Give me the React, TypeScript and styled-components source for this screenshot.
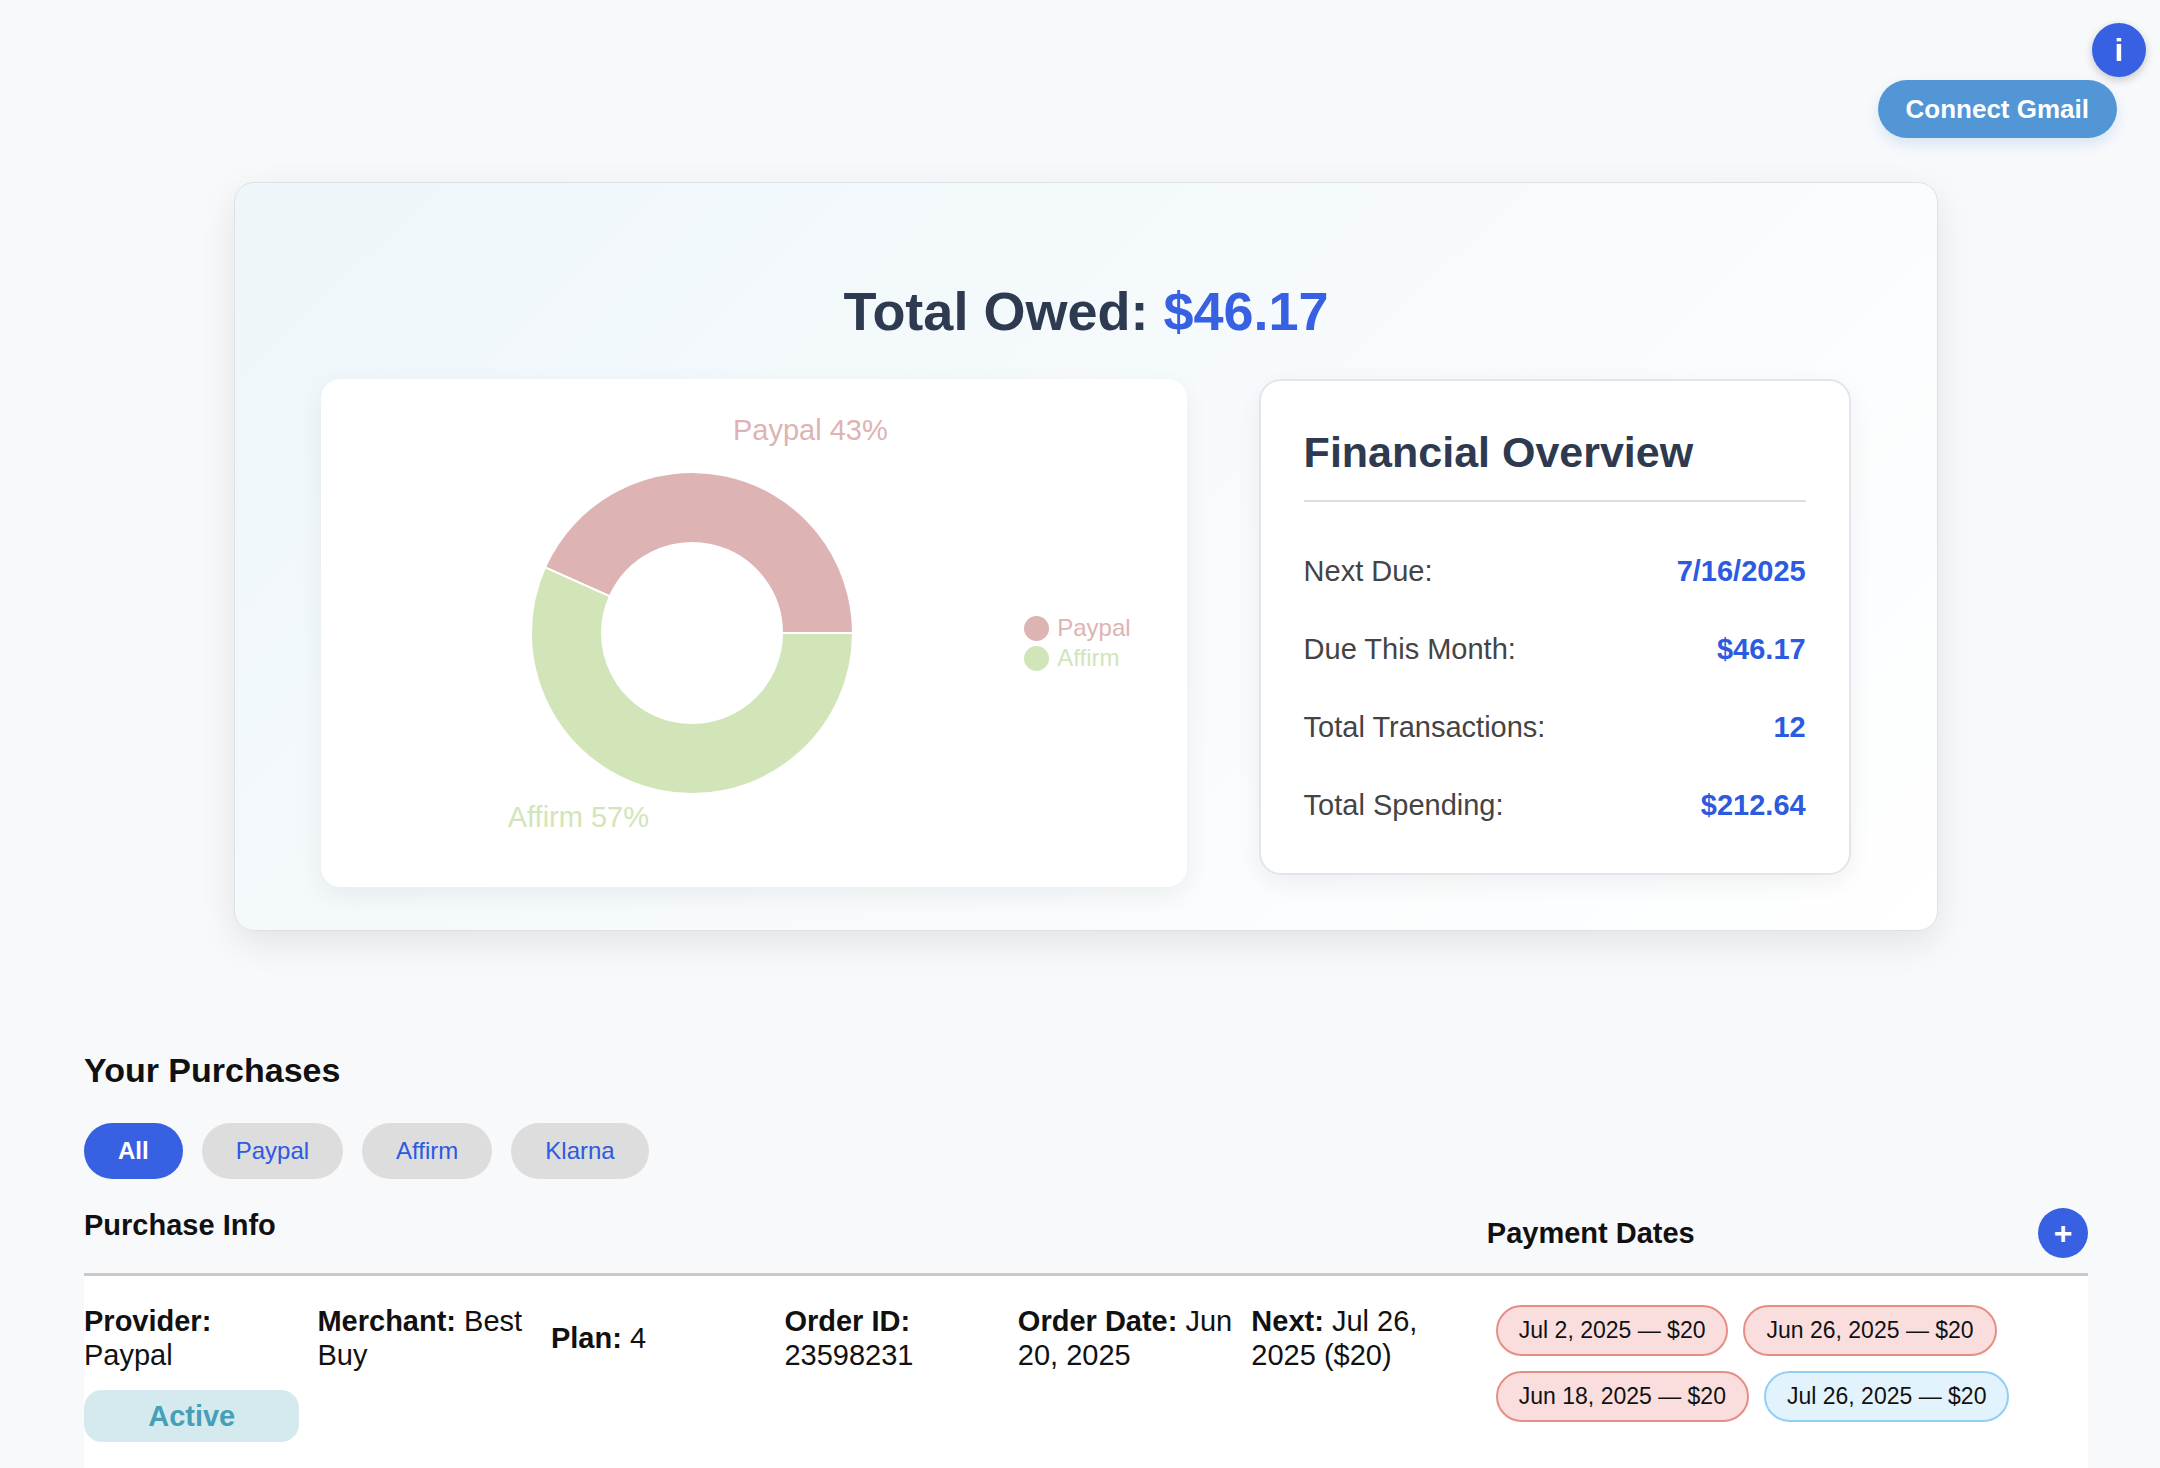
import React, { useState } from 'react';
import styled, { createGlobalStyle } from 'styled-components';

const blue = '#3760e2';
const ink = '#111111';
const slate = '#2d3a50';

const GlobalStyle = createGlobalStyle`
  *, *::before, *::after {
    box-sizing: border-box;
  }
  body {
    margin: 0;
    background: #f8f9fb;
    color: ${ink};
    font-family: "Liberation Sans", Arial, Helvetica, sans-serif;
    font-size: 29px;
    line-height: 34px;
  }
  button {
    font-family: inherit;
    border: 0;
    cursor: pointer;
  }
`;

const TopBar = styled.header`
  display: flex;
  justify-content: flex-end;
  padding: 80px 43px 0;
`;

const ConnectButton = styled.button`
  padding: 14px 28px;
  border-radius: 29px;
  background: #5296d6;
  color: #ffffff;
  font-size: 26px;
  font-weight: 700;
  line-height: 30px;
  box-shadow: 0 6px 14px rgba(82, 150, 214, 0.2);
`;

const RoundButton = styled.button<{ $size: number }>`
  display: flex;
  align-items: center;
  justify-content: center;
  width: ${(p) => p.$size}px;
  height: ${(p) => p.$size}px;
  padding: 0;
  border-radius: 50%;
  background: ${blue};
  color: #ffffff;
  font-size: 32px;
  font-weight: 700;
  line-height: 32px;
`;

const InfoButton = styled(RoundButton)`
  position: fixed;
  top: 23px;
  right: 14px;
  box-shadow: 0 3px 10px rgba(0, 0, 0, 0.2);
`;

const Page = styled.main`
  padding: 44px 72px 0 84px;
`;

const Summary = styled.section`
  width: 85%;
  margin: 0 auto 120px;
  padding: 96px 86px 43px;
  border: 1px solid #dde1e7;
  border-radius: 20px;
  background: linear-gradient(135deg, #eef6fa 0%, #ffffff 100%);
  box-shadow: 0 12px 36px rgba(0, 0, 0, 0.09);
`;

const TotalOwed = styled.h1`
  margin: 0 0 36px;
  color: ${slate};
  font-size: 54px;
  line-height: 64px;
  text-align: center;
`;

const Amount = styled.span`
  color: ${blue};
`;

const SummaryGrid = styled.div`
  display: grid;
  grid-template-columns: minmax(0, 19fr) minmax(0, 13fr);
  gap: 72px;
  align-items: start;
`;

const ChartCard = styled.figure`
  display: flex;
  align-items: center;
  gap: 18px;
  margin: 0;
  padding: 32px 56px;
  border-radius: 20px;
  background: #ffffff;
  box-shadow: 0 8px 26px rgba(0, 0, 0, 0.06);
`;

const ChartArea = styled.div`
  display: flex;
  flex: 1;
  justify-content: center;
`;

const Legend = styled.ul`
  margin: 0;
  padding: 20px 0 0;
  list-style: none;
`;

const LegendItem = styled.li<{ $color: string }>`
  display: flex;
  align-items: center;
  gap: 8px;
  color: ${(p) => p.$color};
  font-size: 24px;
  line-height: 30px;

  &::before {
    content: "";
    width: 25px;
    height: 25px;
    border-radius: 50%;
    background: ${(p) => p.$color};
  }
`;

const Overview = styled.section`
  padding: 45px 43px 29px;
  border: 2px solid #e2e6ec;
  border-radius: 22px;
  background: #ffffff;
  box-shadow: 0 8px 26px rgba(0, 0, 0, 0.06);
`;

const OverviewTitle = styled.h2`
  margin: 0 0 30px;
  padding-bottom: 22px;
  border-bottom: 2px solid #dddddd;
  color: ${slate};
  font-size: 43px;
  line-height: 52px;
`;

const Stats = styled.dl`
  margin: 0;
`;

const Stat = styled.div`
  display: flex;
  justify-content: space-between;
  padding: 22px 0;
`;

const StatLabel = styled.dt`
  color: #444444;
`;

const StatValue = styled.dd`
  margin: 0;
  color: #2c5ae0;
  font-weight: 700;
`;

const PurchasesTitle = styled.h2`
  margin: 0 0 34px;
  font-size: 34px;
  line-height: 38px;
`;

const Filters = styled.div`
  display: flex;
  gap: 19px;
  margin-bottom: 29px;
`;

const FilterButton = styled.button<{ $active: boolean }>`
  padding: 14px 34px;
  border-radius: 28px;
  background: ${(p) => (p.$active ? blue : '#dddddd')};
  color: ${(p) => (p.$active ? '#ffffff' : '#2c5ae0')};
  font-size: 24px;
  font-weight: ${(p) => (p.$active ? 700 : 400)};
  line-height: 28px;
`;

const Table = styled.table`
  width: 100%;
  border-collapse: separate;
  border-spacing: 0;
  table-layout: fixed;
`;

const HeadCell = styled.th<{ $width: string }>`
  width: ${(p) => p.$width};
  padding: 0 0 15px;
  border-bottom: 3px solid #c9c9c9;
  text-align: left;
  vertical-align: top;
`;

const HeadBar = styled.div`
  display: flex;
  align-items: center;
  justify-content: space-between;
`;

const InfoCell = styled.td`
  padding: 28px 20px 26px 0;
  background: #ffffff;
  vertical-align: top;
`;

const DatesCell = styled.td`
  padding: 29px 9px;
  background: #ffffff;
  vertical-align: top;
`;

const Fields = styled.div`
  display: grid;
  grid-template-columns: repeat(6, minmax(0, 1fr));
  gap: 18px;
  align-items: center;
`;

const Status = styled.span`
  padding: 9px 12px;
  border-radius: 18px;
  background: #d5eaef;
  color: #459fb6;
  font-weight: 700;
  text-align: center;
`;

const DateList = styled.ul`
  display: flex;
  flex-wrap: wrap;
  gap: 15px;
  margin: 0;
  padding: 0;
  list-style: none;
`;

const DatePill = styled.li<{ $past: boolean }>`
  padding: 10px 21px;
  border: 2px solid ${(p) => (p.$past ? '#e58e86' : '#92cff3')};
  border-radius: 26px;
  background: ${(p) => (p.$past ? '#fadede' : '#e3f3fd')};
  font-size: 23px;
  line-height: 27px;
`;

type Slice = { name: string; amount: number; color: string; labelX: number; labelY: number; anchor: 'start' | 'end' };

const slices: Slice[] = [
  { name: 'Paypal', amount: 20, color: '#deb3b3', labelX: 251, labelY: 29, anchor: 'start' },
  { name: 'Affirm', amount: 26.17, color: '#d1e5b8', labelX: 167, labelY: 416, anchor: 'end' },
];

const stats = [
  ['Next Due:', '7/16/2025'],
  ['Due This Month:', '$46.17'],
  ['Total Transactions:', '12'],
  ['Total Spending:', '$212.64'],
];

const providers = ['All', 'Paypal', 'Affirm', 'Klarna'];

const purchases = [
  {
    provider: 'Paypal',
    fields: [
      ['Provider:', 'Paypal'],
      ['Merchant:', 'Best Buy'],
      ['Plan:', '4'],
      ['Order ID:', '23598231'],
      ['Order Date:', 'Jun 20, 2025'],
      ['Next:', 'Jul 26, 2025 ($20)'],
    ],
    status: 'Active',
    dates: [
      { text: 'Jul 2, 2025 — $20', past: true },
      { text: 'Jun 26, 2025 — $20', past: true },
      { text: 'Jun 18, 2025 — $20', past: true },
      { text: 'Jul 26, 2025 — $20', past: false },
    ],
  },
];

const CENTER_X = 210;
const CENTER_Y = 222;
const OUTER = 161;
const INNER = 90;

function point(radius: number, angle: number) {
  return `${CENTER_X + radius * Math.cos(angle)} ${CENTER_Y - radius * Math.sin(angle)}`;
}

function ringPath(start: number, end: number) {
  const large = end - start > Math.PI ? 1 : 0;
  return [
    `M ${point(OUTER, start)}`,
    `A ${OUTER} ${OUTER} 0 ${large} 0 ${point(OUTER, end)}`,
    `L ${point(INNER, end)}`,
    `A ${INNER} ${INNER} 0 ${large} 1 ${point(INNER, start)}`,
    'Z',
  ].join(' ');
}

function Donut() {
  const total = slices.reduce((sum, s) => sum + s.amount, 0);
  let angle = 0;
  return (
    <svg width="420" height="444" viewBox="0 0 420 444" role="img" aria-label="Amount owed by provider">
      {slices.map((s) => {
        const start = angle;
        angle += (s.amount / total) * Math.PI * 2;
        return (
          <g key={s.name} fill={s.color}>
            <path d={ringPath(start, angle)} stroke="#ffffff" strokeWidth="2" />
            <text x={s.labelX} y={s.labelY} textAnchor={s.anchor} fontSize="29">
              {`${s.name} ${Math.round((s.amount / total) * 100)}%`}
            </text>
          </g>
        );
      })}
    </svg>
  );
}

export default function App() {
  const [filter, setFilter] = useState('All');
  const visible = purchases.filter((p) => filter === 'All' || p.provider === filter);

  return (
    <>
      <GlobalStyle />
      <InfoButton type="button" $size={54} aria-label="Information">
        i
      </InfoButton>
      <TopBar>
        <ConnectButton type="button">Connect Gmail</ConnectButton>
      </TopBar>
      <Page>
        <Summary>
          <TotalOwed>
            Total Owed: <Amount>$46.17</Amount>
          </TotalOwed>
          <SummaryGrid>
            <ChartCard>
              <ChartArea>
                <Donut />
              </ChartArea>
              <Legend>
                {slices.map((s) => (
                  <LegendItem key={s.name} $color={s.color}>
                    {s.name}
                  </LegendItem>
                ))}
              </Legend>
            </ChartCard>
            <Overview>
              <OverviewTitle>Financial Overview</OverviewTitle>
              <Stats>
                {stats.map(([label, value]) => (
                  <Stat key={label}>
                    <StatLabel>{label}</StatLabel>
                    <StatValue>{value}</StatValue>
                  </Stat>
                ))}
              </Stats>
            </Overview>
          </SummaryGrid>
        </Summary>

        <PurchasesTitle>Your Purchases</PurchasesTitle>
        <Filters role="group" aria-label="Filter by provider">
          {providers.map((name) => (
            <FilterButton
              key={name}
              type="button"
              $active={name === filter}
              aria-pressed={name === filter}
              onClick={() => setFilter(name)}
            >
              {name}
            </FilterButton>
          ))}
        </Filters>

        <Table>
          <thead>
            <tr>
              <HeadCell $width="70%">Purchase Info</HeadCell>
              <HeadCell $width="30%">
                <HeadBar>
                  Payment Dates
                  <RoundButton type="button" $size={50} aria-label="Add purchase">
                    +
                  </RoundButton>
                </HeadBar>
              </HeadCell>
            </tr>
          </thead>
          <tbody>
            {visible.map((p) => (
              <tr key={p.fields[3][1]}>
                <InfoCell>
                  <Fields>
                    {p.fields.map(([label, value]) => (
                      <span key={label}>
                        <strong>{label}</strong> {value}
                      </span>
                    ))}
                    <Status>{p.status}</Status>
                  </Fields>
                </InfoCell>
                <DatesCell>
                  <DateList>
                    {p.dates.map((d) => (
                      <DatePill key={d.text} $past={d.past}>
                        {d.text}
                      </DatePill>
                    ))}
                  </DateList>
                </DatesCell>
              </tr>
            ))}
          </tbody>
        </Table>
      </Page>
    </>
  );
}
